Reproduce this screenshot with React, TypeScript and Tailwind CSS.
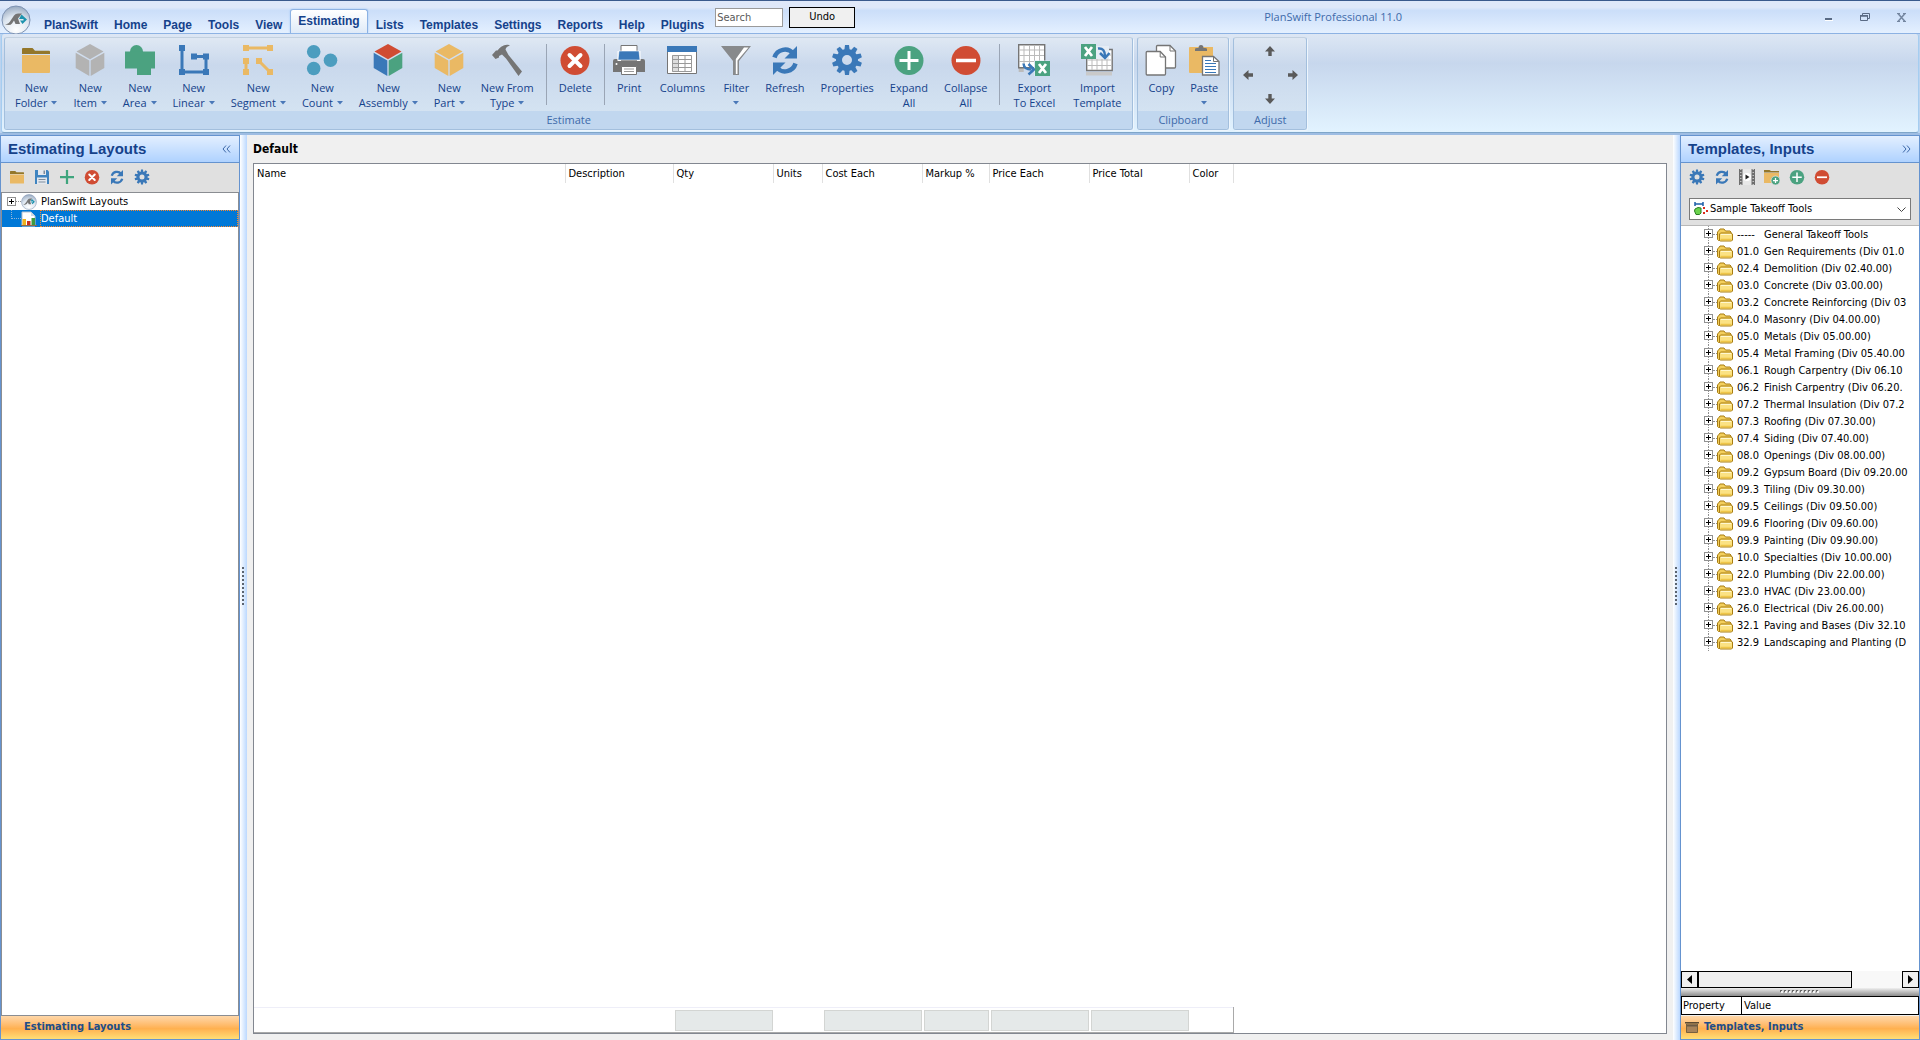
import React, { useState } from 'react';
import clsx from 'clsx';

interface IconProps {
  size?: number;
}

interface RibbonItem {
  lines: string[];
  icon: React.FC<IconProps>;
  menu?: boolean;
  sepBefore?: boolean;
  width?: string;
}

const TABS = ['PlanSwift', 'Home', 'Page', 'Tools', 'View', 'Estimating', 'Lists', 'Templates', 'Settings', 'Reports', 'Help', 'Plugins'];

const COLUMNS = [
  { name: 'Name', width: 'w-[311px]', total: false },
  { name: 'Description', width: 'w-[108px]', total: false },
  { name: 'Qty', width: 'w-[100px]', total: true },
  { name: 'Units', width: 'w-[49px]', total: false },
  { name: 'Cost Each', width: 'w-[100px]', total: true },
  { name: 'Markup %', width: 'w-[67px]', total: true },
  { name: 'Price Each', width: 'w-[100px]', total: true },
  { name: 'Price Total', width: 'w-[100px]', total: true },
  { name: 'Color', width: 'w-[44px]', total: false },
];

const TEMPLATES = [
  ['-----', 'General Takeoff Tools'],
  ['01.0', 'Gen Requirements (Div 01.0'],
  ['02.4', 'Demolition (Div 02.40.00)'],
  ['03.0', 'Concrete (Div 03.00.00)'],
  ['03.2', 'Concrete Reinforcing (Div 03'],
  ['04.0', 'Masonry (Div 04.00.00)'],
  ['05.0', 'Metals (Div 05.00.00)'],
  ['05.4', 'Metal Framing (Div 05.40.00'],
  ['06.1', 'Rough Carpentry (Div 06.10'],
  ['06.2', 'Finish Carpentry (Div 06.20.'],
  ['07.2', 'Thermal Insulation (Div 07.2'],
  ['07.3', 'Roofing (Div 07.30.00)'],
  ['07.4', 'Siding (Div 07.40.00)'],
  ['08.0', 'Openings (Div 08.00.00)'],
  ['09.2', 'Gypsum Board (Div 09.20.00'],
  ['09.3', 'Tiling (Div 09.30.00)'],
  ['09.5', 'Ceilings (Div 09.50.00)'],
  ['09.6', 'Flooring (Div 09.60.00)'],
  ['09.9', 'Painting (Div 09.90.00)'],
  ['10.0', 'Specialties (Div 10.00.00)'],
  ['22.0', 'Plumbing (Div 22.00.00)'],
  ['23.0', 'HVAC (Div 23.00.00)'],
  ['26.0', 'Electrical (Div 26.00.00)'],
  ['32.1', 'Paving and Bases (Div 32.10'],
  ['32.9', 'Landscaping and Planting (D'],
];

/* ---------- Icons ---------- */

const Svg: React.FC<{ size?: number; box?: number; children: React.ReactNode }> = ({ size = 32, box = 32, children }) => (
  <svg width={size} height={size} viewBox={`0 0 ${box} ${box}`} fill="none" className="shrink-0" aria-hidden="true">
    {children}
  </svg>
);

const FolderIcon: React.FC<IconProps> = ({ size }) => (
  <Svg size={size}>
    <path d="M2 10V5q0-1 1-1h9.500l2.500 2.700H29q1 0 1 1V10z" fill="#94772a" />
    <path d="M2 11h28v17q0 1-1 1H3q-1 0-1-1z" fill="#eab964" />
  </Svg>
);

const Cube: React.FC<IconProps & { top: string; left: string; right: string }> = ({ size, top, left, right }) => (
  <Svg size={size}>
    <path d="M16 0l13.500 7.600L16 15.300 2.500 7.600z" fill={top} />
    <path d="M1.700 8.800l13.600 7.800V32L1.700 24z" fill={left} />
    <path d="M30.300 8.800l-13.600 7.800V32l13.600-8z" fill={right} />
  </Svg>
);

const ItemIcon: React.FC<IconProps> = p => <Cube {...p} top="#b3b3b3" left="#b3b3b3" right="#b3b3b3" />;
const AssemblyIcon: React.FC<IconProps> = p => <Cube {...p} top="#d04c33" left="#3a78b8" right="#4ba280" />;
const PartIcon: React.FC<IconProps> = p => <Cube {...p} top="#eab964" left="#eab964" right="#eab964" />;

const AreaIcon: React.FC<IconProps> = ({ size }) => (
  <Svg size={size}>
    <circle cx="12.500" cy="7.500" r="6.500" fill="#4ba280" />
    <path d="M1 7.500h30v17h-4V31H13v-6.500H1z" fill="#4ba280" />
  </Svg>
);

const LinearIcon: React.FC<IconProps> = ({ size }) => (
  <Svg size={size}>
    <path d="M4 4v24h24V12.500H16" stroke="#3a78b8" strokeWidth="3" />
    <path d="M1 1h6v6H1zM1 25h6v6H1zM25 25h6v6h-6zM25 9.500h6v6h-6zM13 9.500h6v6h-6z" fill="#3a78b8" />
  </Svg>
);

const SegmentIcon: React.FC<IconProps> = ({ size }) => (
  <Svg size={size}>
    <path d="M4 4h24M4 17v11M17 17l11 11" stroke="#eab964" strokeWidth="3" />
    <path d="M1 1h6v6H1zM25 1h6v6h-6zM1 14h6v6H1zM1 25h6v6H1zM14 14h6v6h-6zM25 25h6v6h-6z" fill="#eab964" />
  </Svg>
);

const CountIcon: React.FC<IconProps> = ({ size }) => (
  <Svg size={size}>
    <circle cx="7.700" cy="7.700" r="6.800" fill="#4c9dbf" />
    <circle cx="7.700" cy="24.500" r="6.800" fill="#4c9dbf" />
    <circle cx="24.500" cy="16.300" r="6.800" fill="#4c9dbf" />
  </Svg>
);

const HammerIcon: React.FC<IconProps> = ({ size }) => (
  <Svg size={size}>
    <path d="M1 11l4-4.500h1.500Q10 1.500 16 .8q2-.2 3 .7-4 1-4.500 4l3 5.500L31 27.500 27.500 32 15 14.500l-4-4-3 1.500v1.500L4.500 15z" fill="#757575" />
  </Svg>
);

const DeleteIcon: React.FC<IconProps> = ({ size }) => (
  <Svg size={size}>
    <circle cx="16" cy="16.500" r="14.500" fill="#d04c33" />
    <path d="M10.500 11l11 11M21.500 11l-11 11" stroke="#fff" strokeWidth="4" strokeLinecap="round" />
  </Svg>
);

const PrintIcon: React.FC<IconProps> = ({ size }) => (
  <Svg size={size}>
    <path d="M0 17q0-2 2-2h28q2 0 2 2v11H0z" fill="#757575" />
    <path d="M8 1.500h16v8H8z" fill="#fff" stroke="#757575" />
    <path d="M4.500 7H8v10H4.500zM24 7h3.500v10H24z" fill="#fff" />
    <path d="M6 7h20l1 9H5z" fill="#3a78b8" stroke="#fff" strokeWidth=".6" />
    <path d="M8.500 22.500h15v8h-15z" fill="#fff" stroke="#757575" />
    <path d="M11 25h10M11 27.500h10" stroke="#999" />
    <circle cx="3.500" cy="20" r="1" fill="#fff" />
  </Svg>
);

const ColumnsIcon: React.FC<IconProps> = ({ size }) => (
  <Svg size={size}>
    <path d="M1.500 2.500h29v27h-29z" fill="#fff" stroke="#757575" />
    <path d="M1 2h30v6H1z" fill="#3a78b8" />
    <path d="M6 11h6.500v17H6z" fill="#ddd" />
    <path d="M6.500 11.500h19v16h-19zM6.500 15.500h19M6.500 19.500h19M6.500 23.500h19M12.500 11.500v16M19 11.500v16" stroke="#999" />
  </Svg>
);

const FilterIcon: React.FC<IconProps> = ({ size }) => (
  <Svg size={size}>
    <path d="M1 2h30L19 17v14h-6V17z" fill="#888a8c" />
    <path d="M24 3.500h4.500L17.500 16.500V30H15.800V15z" fill="#fff" />
  </Svg>
);

const RefreshIcon: React.FC<IconProps> = ({ size }) => (
  <Svg size={size}>
    <path d="M5.500 13.500C8 5 19 3 24 9.500" stroke="#3a78b8" strokeWidth="4.500" />
    <path d="M28 2v12.500H15.500z" fill="#3a78b8" />
    <path d="M26.500 19.500C24 28 13 30 8 23.500" stroke="#3a78b8" strokeWidth="4.500" />
    <path d="M4 31V18.500h12.500z" fill="#3a78b8" />
  </Svg>
);

const GearIcon: React.FC<IconProps> = ({ size }) => (
  <Svg size={size}>
    <circle cx="16" cy="16" r="8" stroke="#3a78b8" strokeWidth="6" />
    {[0, 36, 72, 108, 144, 180, 216, 252, 288, 324].map(a => (
      <path key={a} d="M13.300 6.500L14 1h4l.7 5.500z" fill="#3a78b8" transform={`rotate(${a} 16 16)`} />
    ))}
  </Svg>
);

const ExpandIcon: React.FC<IconProps> = ({ size }) => (
  <Svg size={size}>
    <circle cx="16" cy="16.500" r="14.500" fill="#4ba280" />
    <path d="M16 7v19M6.500 16.500h19" stroke="#fff" strokeWidth="3" />
  </Svg>
);

const CollapseIcon: React.FC<IconProps> = ({ size }) => (
  <Svg size={size}>
    <circle cx="16" cy="16.500" r="14.500" fill="#d04c33" />
    <path d="M6 16.500h20" stroke="#fff" strokeWidth="3.500" />
  </Svg>
);

const ExcelBadge = () => (
  <g>
    <path d="M0 0h15v15H0z" fill="#4ba280" />
    <path d="M4 3l7 9M11 3l-7 9" stroke="#fff" strokeWidth="2.800" />
  </g>
);

const ExportIcon: React.FC<IconProps> = ({ size }) => (
  <Svg size={size}>
    <path d="M.7 23h5v5h-5z" fill="#bbb" />
    <path d="M.7.7h26v23H.7z" fill="#fff" stroke="#757575" strokeWidth="1.400" />
    <path d="M1 6h25M1 11.500h25M1 17.500h25M6 1v22M11.500 1v22M16.500 1v22M21.500 1v22" stroke="#bbb" />
    <path d="M16 16.500h16V32H16z" fill="#dce7f3" />
    <path d="M5.500 19.500q.5 6 8 6" stroke="#3a78b8" strokeWidth="2.500" />
    <path d="M10.500 20l5.500 5.500-5.500 5" stroke="#3a78b8" strokeWidth="2.500" />
    <g transform="translate(17 17)"><ExcelBadge /></g>
  </Svg>
);

const ImportIcon: React.FC<IconProps> = ({ size }) => (
  <Svg size={size}>
    <path d="M5 28h26v3.500H5z" fill="#c9c9c9" />
    <path d="M5.700 5.500h25.500v21H5.700z" fill="#fff" stroke="#757575" strokeWidth="1.400" />
    <path d="M6 11h25M6 16h25M6 21.500h25M11 6v20M16 6v20M21 6v20M26 6v20" stroke="#bbb" />
    <path d="M15 2h13v13H15z" fill="#e6edf5" />
    <path d="M17 4.500q7-1 7 8" stroke="#3a78b8" strokeWidth="2.500" />
    <path d="M19 9l5 5 4.500-5" stroke="#3a78b8" strokeWidth="2.500" />
    <ExcelBadge />
  </Svg>
);

const CopyIcon: React.FC<IconProps> = ({ size }) => (
  <Svg size={size}>
    <path d="M11.500 2.500q0-1 1-1H25l5.500 5.500v16q0 1-1 1h-17q-1 0-1-1z" fill="#fff" stroke="#757575" strokeWidth="1.300" />
    <path d="M25 1.500V7h5.500" stroke="#757575" />
    <path d="M1.200 8.500q0-1 1-1h13l5.300 5.500v17q0 1-1 1H2.200q-1 0-1-1z" fill="#fff" stroke="#757575" strokeWidth="1.300" />
    <path d="M15.200 7.500V13h5.300" stroke="#757575" />
  </Svg>
);

const PasteIcon: React.FC<IconProps> = ({ size }) => (
  <Svg size={size}>
    <path d="M1 4q0-1 1-1h23v26H2q-1 0-1-1z" fill="#eab964" />
    <path d="M7 7V5q0-1 2-1h1.500Q10.500 1 13 1t2.500 3H17q2 0 2 1v2z" fill="#757575" />
    <path d="M14.500 12.500h11l5.500 5v13.500H14.500z" fill="#fff" stroke="#757575" strokeWidth="1.300" />
    <path d="M25.500 12.500v5H31" stroke="#757575" />
    <path d="M17 16.500h6M17 19.500h11M17 22.500h11M17 25.500h11M17 28.500h11" stroke="#3a78b8" strokeWidth="1.200" />
  </Svg>
);

const SaveIcon: React.FC<IconProps> = ({ size }) => (
  <Svg size={size}>
    <path d="M2 2h25l3 3v25H2z" fill="#3f84c0" />
    <path d="M8 2h16v10H8zM6 17h20v13H6z" fill="#e4e8ee" />
    <path d="M19 3h3v7h-3zM9 20h14v2H9zM9 25h14v2H9z" fill="#7d8c9c" />
  </Svg>
);

const PlusIcon: React.FC<IconProps> = ({ size }) => (
  <Svg size={size}>
    <path d="M16 2v28M2 16h28" stroke="#3fa57d" strokeWidth="4.500" />
  </Svg>
);

const FilmIcon: React.FC<IconProps> = ({ size }) => (
  <Svg size={size}>
    <path d="M0 0h32v32H0z" fill="#6e6e6e" />
    <path d="M7 0h18v32H7z" fill="#e8e8e8" />
    <path d="M3.500 0v32M28.500 0v32" stroke="#c4c4c4" strokeWidth="3" strokeDasharray="2 4" />
    <circle cx="16" cy="16" r="8" fill="#fff" />
    <path d="M13 11l8 5-8 5z" fill="#222" />
  </Svg>
);

const AddFolderIcon: React.FC<IconProps> = ({ size }) => (
  <Svg size={size}>
    <path d="M0 7V2h11l3 2h16v3z" fill="#94772a" />
    <path d="M0 8h30v20H0z" fill="#eab964" />
    <circle cx="23" cy="23" r="9" fill="#4ba280" stroke="#e0e0e0" strokeWidth="1.500" />
    <path d="M23 18v10M18 23h10" stroke="#fff" strokeWidth="2.500" />
  </Svg>
);

const TreeFolderIcon = () => (
  <svg width="16" height="14" viewBox="0 0 16 14" fill="none" className="shrink-0" aria-hidden="true">
    <path d="M.5 11.500V4l1-1L3 1h4l1.500 2H13l1 1v8.500H1.500z" fill="#f3cf5c" stroke="#a87c12" />
    <path d="M2.500 12.500V6l1-1H14l1.500 1v6l-1 1h-11z" fill="#fbe283" stroke="#a87c12" />
    <path d="M4 6.500h10" stroke="#fff8d0" />
    <path d="M3.500 11.500h11" stroke="#efc648" strokeWidth="1.500" />
  </svg>
);

const LogoIcon: React.FC<IconProps> = ({ size = 30 }) => (
  <Svg size={size} box={30}>
    <defs>
      <radialGradient id="orb" cx=".5" cy=".85" r=".9">
        <stop offset="0" stopColor="#fff" />
        <stop offset=".55" stopColor="#dde6f0" />
        <stop offset="1" stopColor="#8ea0b8" />
      </radialGradient>
    </defs>
    <circle cx="15" cy="15" r="14" fill="url(#orb)" stroke="#7e93b3" />
    <path d="M4 19.500q4-.5 6-4.500l3-4.500Q14.500 8.500 17 8.500h4l-4 5 2 5.500h-4.500l-1.500-3.500-2 3Q10 20 7.500 20z" fill="#757575" />
    <path d="M20.500 9.500l5.500 5-4.500 4.500-2.500-3.500h3.500v-1.500H18z" fill="#1d93ae" />
  </Svg>
);

const ReportPageIcon = () => (
  <svg width="16" height="16" viewBox="0 0 16 16" fill="none" className="shrink-0" aria-hidden="true">
    <path d="M1 1h9l4 4v10H1z" fill="#fff" stroke="#b9c3cf" />
    <path d="M10 1v4h4z" fill="#cdd8e6" />
    <path d="M1.500 8H5v6H1.500z" fill="#f0b31e" />
    <path d="M6 10h3.500v4H6z" fill="#c8321e" />
    <path d="M10.500 7H14v7h-3.500z" fill="#3d9a40" />
    <path d="M0 14.500h16" stroke="#8e6a4a" />
  </svg>
);

const TakeoffIcon = () => (
  <svg width="14" height="14" viewBox="0 0 14 14" fill="none" className="shrink-0" aria-hidden="true">
    <path d="M1 2h8" stroke="#1c5fa8" strokeWidth="1.500" />
    <path d="M1 0v4M9 0v4" stroke="#1c5fa8" strokeWidth="1.500" />
    <path d="M1 7l3-1.500L7 6v5l-1.500 1.500H2L.5 9z" fill="#6bd34d" stroke="#2b7d22" />
    <path d="M9 5h2v2H9zM9 10h2v2H9zM12 8h2v2h-2z" fill="#dd2c1c" />
  </svg>
);

const BoxIcon = () => (
  <svg width="14" height="11" viewBox="0 0 14 11" className="shrink-0" aria-hidden="true">
    <path d="M0 0h14v1.500H0z" fill="#5c4a33" />
    <path d="M1.500 2h11v8.500h-11z" fill="#a8835a" stroke="#76603f" />
    <path d="M2 3h10v1.500H2z" fill="#6d5a44" />
  </svg>
);

const Caret = () => (
  <svg width="6" height="4" viewBox="0 0 6 4" className="shrink-0" aria-hidden="true">
    <path d="M0 0h6L3 3.500z" fill="#4a78b8" />
  </svg>
);

const ArrowIcon: React.FC<{ angle: number }> = ({ angle }) => (
  <Svg size={12} box={12}>
    <path d="M6 1l5 5.500H7.700V11H4.300V6.500H1z" fill="#5a5a5a" transform={`rotate(${angle} 6 6)`} />
  </Svg>
);

const Chevrons: React.FC<{ right?: boolean }> = ({ right }) => (
  <svg width="9" height="8" viewBox="0 0 9 8" fill="none" aria-hidden="true">
    <path d={right ? 'M1 .5L4 4 1 7.500M5 .5L8 4 5 7.500' : 'M4 .5L1 4l3 3.500M8 .5L5 4l3 3.500'} stroke="#3d68a8" />
  </svg>
);

/* ---------- Ribbon ---------- */

const ESTIMATE_ITEMS: RibbonItem[] = [
  { lines: ['New', 'Folder'], icon: FolderIcon, menu: true },
  { lines: ['New', 'Item'], icon: ItemIcon, menu: true },
  { lines: ['New', 'Area'], icon: AreaIcon, menu: true },
  { lines: ['New', 'Linear'], icon: LinearIcon, menu: true },
  { lines: ['New', 'Segment'], icon: SegmentIcon, menu: true },
  { lines: ['New', 'Count'], icon: CountIcon, menu: true },
  { lines: ['New', 'Assembly'], icon: AssemblyIcon, menu: true },
  { lines: ['New', 'Part'], icon: PartIcon, menu: true },
  { lines: ['New From', 'Type'], icon: HammerIcon, menu: true },
  { lines: ['Delete'], icon: DeleteIcon, sepBefore: true },
  { lines: ['Print'], icon: PrintIcon, sepBefore: true },
  { lines: ['Columns'], icon: ColumnsIcon, width: 'w-[66px]' },
  { lines: ['Filter', ''], icon: FilterIcon, menu: true },
  { lines: ['Refresh'], icon: RefreshIcon },
  { lines: ['Properties'], icon: GearIcon },
  { lines: ['Expand', 'All'], icon: ExpandIcon },
  { lines: ['Collapse', 'All'], icon: CollapseIcon },
  { lines: ['Export', 'To Excel'], icon: ExportIcon, sepBefore: true, width: 'w-[60px]' },
  { lines: ['Import', 'Template'], icon: ImportIcon, width: 'w-[66px]' },
];

const CLIPBOARD_ITEMS: RibbonItem[] = [
  { lines: ['Copy'], icon: CopyIcon },
  { lines: ['Paste', ''], icon: PasteIcon, menu: true },
];

const RibbonButton: React.FC<{ item: RibbonItem }> = ({ item }) => {
  const Icon = item.icon;
  return (
    <>
      {item.sepBefore && (
        <div className="flex w-[9px] justify-center pt-1.5">
          <div className="h-[61px] w-px bg-[#9aa5b5]" />
        </div>
      )}
      <button className={clsx('flex flex-col items-center px-2 pt-1.5 text-[11px] leading-[15px] text-[#15428b] hover:bg-white/30', item.width)}>
        {/* the icon may be wider than a short label, so it does not take part in the width */}
        <span className="flex h-9 w-6 justify-center">
          <Icon />
        </span>
        {item.lines.map((line, i) => (
          <span key={i} className="flex h-[15px] items-center gap-1 whitespace-nowrap">
            {line}
            {item.menu && i === item.lines.length - 1 && <Caret />}
          </span>
        ))}
      </button>
    </>
  );
};

const RibbonGroup: React.FC<{ title: string; children: React.ReactNode }> = ({ title, children }) => (
  <section className="flex flex-col overflow-hidden rounded-[3px] border border-[#a3bfdd] border-t-[#c3d1e0] bg-linear-to-b from-[#dfe8f3] from-0% via-[#c9d8ec] via-30% to-[#d8e7f4] to-100% shadow-[1px_1px_0_#eef6fd]">
    <div className="flex flex-1 px-0.5">{children}</div>
    <h2 className="h-[18px] bg-[#c1d7ef] text-center text-[11px] leading-[18px] text-[#3e6aaa]">{title}</h2>
  </section>
);

/* ---------- Shared parts ---------- */

const PanelHeader: React.FC<{ title: string; right?: boolean }> = ({ title, right }) => (
  <header className="flex h-[27px] shrink-0 items-center justify-between border-b border-[#6593cf] bg-linear-to-b from-[#e3efff] to-[#afd2ff] pr-2 pl-[7px]">
    <h2 className="font-[Liberation_Sans] text-[15px] font-bold text-[#15428b]">{title}</h2>
    <button aria-label="Collapse panel"><Chevrons right={right} /></button>
  </header>
);

const IconBar: React.FC<{ items: [string, React.FC<IconProps>][] }> = ({ items }) => (
  <div className="flex h-[29px] shrink-0 items-center gap-[9px] bg-[#e0e0e0] px-2 pb-0.5">
    {items.map(([name, Icon]) => (
      <button key={name} aria-label={name}><Icon size={16} /></button>
    ))}
  </div>
);

const PanelFooter: React.FC<{ children: React.ReactNode }> = ({ children }) => (
  <button className="flex h-[23px] w-full shrink-0 items-center gap-[5px] bg-linear-to-b from-[#ffd7a8] from-0% via-[#ffb04f] via-55% to-[#ffde75] to-100% text-[11px] font-bold text-[#204d89]">
    {children}
  </button>
);

const Splitter = () => (
  <div className="flex w-[7px] shrink-0 cursor-col-resize flex-col items-start justify-center gap-0.5 bg-linear-to-r from-white to-[#bbd8ff] pb-1 pl-0.5">
    {Array.from({ length: 10 }, (_, i) => (
      <span key={i} className="size-0.5 bg-[#5b6470]" />
    ))}
  </div>
);

const Expander = () => (
  <button aria-label="Expand" className="flex size-[9px] shrink-0 items-center justify-center border border-[#919191] bg-white">
    <svg width="5" height="5" viewBox="0 0 5 5" aria-hidden="true">
      <path d="M0 2h5v1H0zM2 0h1v5H2z" fill="#000" />
    </svg>
  </button>
);

export default function App() {
  const [activeTab, setActiveTab] = useState('Estimating');
  const [search, setSearch] = useState('');

  return (
    <div className="flex h-screen flex-col overflow-hidden bg-[#f0f0f0] font-[DejaVu_Sans_Condensed,sans-serif] text-[11px] text-black">
      {/* Title bar and tabs */}
      <div className="flex h-[34px] shrink-0 border-t border-b border-t-[#3b5a8c] border-b-[#8db2e3] bg-linear-to-b from-[#dfe8f9] from-20% via-[#cbdef9] via-30% to-[#e4f0ff] to-100%">
        <button aria-label="Application menu" className="mt-1 ml-px shrink-0 self-start"><LogoIcon /></button>
        <nav className="flex items-end pl-[5px] font-[Liberation_Sans] text-[12px] font-bold text-[#15428b]">
          {TABS.map(tab => (
            <button
              key={tab}
              onClick={() => setActiveTab(tab)}
              className={clsx(
                'leading-4',
                tab === activeTab
                  ? 'h-6 rounded-t-[3px] border border-b-0 border-[#8db2e3] bg-linear-to-b from-white to-[#dfeaf8] px-[7px] pb-0.5 shadow-[0_0_2px_#9cc4f5]'
                  : 'h-[17px] px-2'
              )}
            >
              {tab}
            </button>
          ))}
        </nav>
        <input
          aria-label="Search"
          placeholder="Search"
          value={search}
          onChange={e => setSearch(e.target.value)}
          className="mt-[7px] ml-[3px] h-[19px] w-[68px] border border-[#9a9a9a] bg-white px-px text-[11px] outline-none placeholder:text-[#5a5a5a]"
        />
        <button className="mt-1.5 ml-1.5 h-[21px] w-[66px] border border-black bg-[#f0f0f0]">Undo</button>
        <h1 className="flex-1 pt-2 text-center font-[Open_Sans] text-[11px] leading-4 text-[#3e6aaa]">PlanSwift Professional 11.0</h1>
        <div className="flex h-8 pr-px">
          <button aria-label="Minimize" className="flex w-9 items-center justify-center">
            <svg width="8" height="8" viewBox="0 0 8 8"><path d="M0 5h7v2H0z" fill="#5a6b85" /><path d="M0 7h8v1H0z" fill="#fff" /></svg>
          </button>
          <button aria-label="Restore" className="flex w-9 items-center justify-center">
            <svg width="10" height="8" viewBox="0 0 10 8" fill="none"><path d="M2.500 2V.5h7v5H8" stroke="#5a6b85" /><path d="M.5 3h7v4.500h-7z" stroke="#5a6b85" /><path d="M0 2h8v1.500H0z" fill="#5a6b85" /></svg>
          </button>
          <button aria-label="Close" className="flex w-9 items-center justify-center">
            <svg width="9" height="9" viewBox="0 0 9 9" fill="none"><path d="M1 .5l7 8M8 .5l-7 8" stroke="#7486a0" strokeWidth="1.500" /><path d="M0 .5h3M6 .5h3M0 8.500h3M6 8.500h3" stroke="#7486a0" /></svg>
          </button>
        </div>
      </div>

      {/* Ribbon */}
      <div className="shrink-0 border-b-2 border-[#9ebde3] bg-[#bcd3ef] px-px">
        <div className="flex h-[99px] gap-1 rounded-[3px] border border-t-0 border-[#a5cdf0] border-b-[#7fa6c9] bg-linear-to-b from-[#dde7f4] from-0% via-[#c7d7ed] via-30% to-[#e2f3ff] to-100% px-0.5 pt-[3px] pb-0.5 font-[Open_Sans]">
          <RibbonGroup title="Estimate">
            {ESTIMATE_ITEMS.map(item => <RibbonButton key={item.lines.join(' ')} item={item} />)}
          </RibbonGroup>
          <RibbonGroup title="Clipboard">
            {CLIPBOARD_ITEMS.map(item => <RibbonButton key={item.lines[0]} item={item} />)}
          </RibbonGroup>
          <RibbonGroup title="Adjust">
            <div className="grid w-[68px] grid-cols-3 grid-rows-3 place-items-center pt-px">
              <button aria-label="Move up" className="col-start-2"><ArrowIcon angle={0} /></button>
              <button aria-label="Move left" className="col-start-1 row-start-2"><ArrowIcon angle={270} /></button>
              <button aria-label="Move right" className="col-start-3 row-start-2"><ArrowIcon angle={90} /></button>
              <button aria-label="Move down" className="col-start-2 row-start-3"><ArrowIcon angle={180} /></button>
            </div>
          </RibbonGroup>
        </div>
      </div>

      <div className="flex min-h-0 flex-1">
        {/* Estimating layouts */}
        <aside className="flex w-60 shrink-0 flex-col border border-[#6593cf]">
          <PanelHeader title="Estimating Layouts" />
          <IconBar
            items={[
              ['Open', FolderIcon],
              ['Save', SaveIcon],
              ['Add', PlusIcon],
              ['Delete', DeleteIcon],
              ['Refresh', RefreshIcon],
              ['Settings', GearIcon],
            ]}
          />
          <ul className="flex-1 border border-[#8a8d92] bg-white">
            <li className="flex h-[17px] items-center pl-[5px]">
              <Expander />
              <span className="w-[5px] border-t border-dotted border-[#919191]" />
              <LogoIcon size={16} />
              <span className="pl-1 leading-[17px]">PlanSwift Layouts</span>
            </li>
            <li className="flex h-[17px] items-center bg-[#0078d7] pl-[9px] text-white">
              <span className="h-[9px] w-2.5 self-start border-b border-l border-dotted border-[#8fb4d8]" />
              <ReportPageIcon />
              <span className="ml-[3px] flex-1 border border-dotted border-[#ff8728] leading-[15px]">Default</span>
            </li>
          </ul>
          <PanelFooter><span className="pl-[23px]">Estimating Layouts</span></PanelFooter>
        </aside>
        <Splitter />

        {/* Estimate table */}
        <main className="flex min-w-0 flex-1 flex-col px-1.5 pb-1.5">
          <h2 className="h-7 text-[12px] leading-7 font-bold">Default</h2>
          <div className="flex flex-1 flex-col border border-[#828790] bg-white">
            <table className="h-full table-fixed self-start border-collapse">
              <thead>
                <tr className="h-[19px]">
                  {COLUMNS.map(c => (
                    <th key={c.name} className={clsx('border-r border-[#e0e0e0] p-0 pl-[3px] text-left leading-[19px] font-normal whitespace-nowrap', c.width)}>{c.name}</th>
                  ))}
                </tr>
              </thead>
              <tbody>
                <tr><td colSpan={COLUMNS.length} /></tr>
              </tbody>
              <tfoot>
                <tr className="h-[25px] border-t border-r border-b border-t-[#eeeef8] border-r-[#a9a9a9] border-b-[#a9a9a9]">
                  {COLUMNS.map(c => (
                    <td key={c.name} className="p-0 pt-px pr-0 pb-px pl-0.5">
                      {c.total && <div className="h-[21px] border border-[#d3d5d3] bg-[#e5e9e9]" />}
                    </td>
                  ))}
                </tr>
              </tfoot>
            </table>
          </div>
        </main>
        <Splitter />

        {/* Templates */}
        <aside className="flex w-60 shrink-0 flex-col border border-[#6593cf]">
          <PanelHeader title="Templates, Inputs" right />
          <IconBar
            items={[
              ['Settings', GearIcon],
              ['Refresh', RefreshIcon],
              ['Video', FilmIcon],
              ['Add folder', AddFolderIcon],
              ['Expand all', ExpandIcon],
              ['Collapse all', CollapseIcon],
            ]}
          />
          <div className="shrink-0 border-b border-[#b8b8b8] bg-[#e0e0e0] px-2 pt-1.5 pb-[5px]">
            <div className="flex h-[22px] items-center border border-[#7a7a7a] bg-white px-1">
              <TakeoffIcon />
              <select aria-label="Template set" className="h-full flex-1 appearance-none bg-transparent pl-0.5 outline-none">
                <option>Sample Takeoff Tools</option>
              </select>
              <svg width="9" height="5" viewBox="0 0 9 5" fill="none" aria-hidden="true"><path d="M.5.5l4 4 4-4" stroke="#444" /></svg>
            </div>
          </div>
          <ul className="min-h-0 flex-1 overflow-hidden bg-white pl-[23px]">
            {TEMPLATES.map(([code, name]) => (
              <li key={code} className="flex h-[17px] items-center">
                <span className="flex h-full w-[9px] shrink-0 flex-col items-center">
                  <span className="h-[3px] border-l border-dotted border-[#919191]" />
                  <Expander />
                  <span className="h-[5px] border-l border-dotted border-[#919191]" />
                </span>
                <span className="w-1 shrink-0 border-t border-dotted border-[#919191]" />
                <TreeFolderIcon />
                <span className="flex pl-1 leading-[17px] whitespace-nowrap">
                  <span className="w-[27px] shrink-0">{code}</span>
                  {name}
                </span>
              </li>
            ))}
          </ul>
          <div className="flex h-[17px] shrink-0 bg-[#f8f8f8]">
            <button aria-label="Scroll left" className="flex w-[17px] items-center justify-center border border-black bg-[#f0f0f0]">
              <svg width="5" height="9" viewBox="0 0 5 9"><path d="M5 0v9L0 4.500z" /></svg>
            </button>
            <div className="w-[154px] border border-black bg-[#f0f0f0]" />
            <div className="flex-1" />
            <button aria-label="Scroll right" className="flex w-[17px] items-center justify-center border border-black bg-[#f0f0f0]">
              <svg width="5" height="9" viewBox="0 0 5 9"><path d="M0 0v9l5-4.500z" /></svg>
            </button>
          </div>
          <div className="flex h-2 shrink-0 cursor-row-resize items-center justify-center gap-0.5 bg-linear-to-b from-[#f0f0f0] to-[#8c8c8c]">
            {Array.from({ length: 10 }, (_, i) => (
              <span key={i} className="size-0.5 bg-[#f4f4f4] shadow-[-1px_-1px_0_#666]" />
            ))}
          </div>
          <table className="mb-px w-full border-collapse bg-white">
            <thead>
              <tr>
                <th className="w-[60px] border border-black p-0 pl-px text-left leading-[17px] font-normal">Property</th>
                <th className="border border-black p-0 pl-0.5 text-left leading-[17px] font-normal">Value</th>
              </tr>
            </thead>
          </table>
          <PanelFooter>
            <span className="pl-1"><BoxIcon /></span>
            <span>Templates, Inputs</span>
          </PanelFooter>
        </aside>
      </div>
    </div>
  );
}
